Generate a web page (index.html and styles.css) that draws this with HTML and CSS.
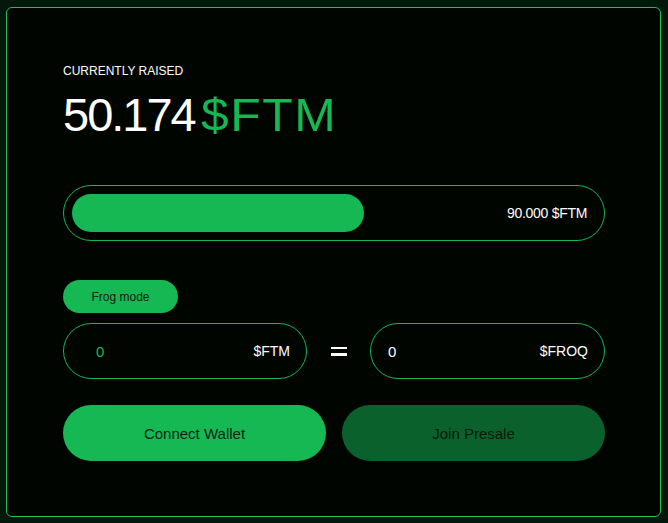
FILE: index.html
```html
<!DOCTYPE html>
<html lang="en">
<head>
<meta charset="utf-8">
<title>Presale</title>
<link rel="stylesheet" href="styles.css">
</head>
<body>
<main class="card">
  <div class="label">CURRENTLY RAISED</div>
  <div class="raised"><span class="amount">50.174</span> <span class="ticker">$FTM</span></div>

  <div class="progress">
    <div class="fill" style="width:55.75%"></div>
    <span class="goal">90.000 $FTM</span>
  </div>

  <button class="mode">Frog mode</button>

  <div class="swap">
    <div class="field field-from">
      <span class="value green">0</span>
      <span class="unit">$FTM</span>
    </div>
    <div class="equals"><span></span><span></span></div>
    <div class="field field-to">
      <span class="value">0</span>
      <span class="unit">$FROQ</span>
    </div>
  </div>

  <div class="actions">
    <button class="btn btn-primary">Connect Wallet</button>
    <button class="btn btn-secondary">Join Presale</button>
  </div>
</main>
</body>
</html>
```

FILE: styles.css
```css
* { box-sizing: border-box; }
html, body { height: 100%; }
body {
  margin: 0;
  padding: 7px 7px 6px 6px;
  background: #03170c;
  font-family: "Liberation Sans", Arial, sans-serif;
  color: #ffffff;
}
.card {
  height: 510px;
  border: 1px solid #1ec257;
  border-radius: 6px;
  background: #000500;
  padding: 56px 55px 0 56px;
  display: flex;
  flex-direction: column;
}
.label {
  font-size: 12px;
  line-height: 14px;
  color: #ffffff;
}
.raised {
  margin-top: 13px;
  font-size: 47px;
  line-height: 47px;
  display: flex;
  gap: 6px;
}
.amount { letter-spacing: -2px; color: #ffffff; }
.ticker { letter-spacing: 1.5px; color: #15b853; transform: scaleX(1.06); transform-origin: left center; }

.progress {
  margin-top: 47px;
  height: 56px;
  border: 1px solid #15b853;
  border-radius: 28px;
  padding: 8px;
  display: flex;
  align-items: center;
  justify-content: space-between;
}
.fill {
  height: 38px;
  border-radius: 19px;
  background: #15b853;
}
.goal {
  font-size: 14px;
  letter-spacing: -0.3px;
  padding-right: 9px;
}

.mode {
  margin-top: 39px;
  align-self: flex-start;
  width: 115px;
  height: 33px;
  border: 0;
  border-radius: 17px;
  background: #15b853;
  color: #0a2213;
  font-family: inherit;
  font-size: 12px;
  padding: 0;
}

.swap {
  margin-top: 10px;
  display: grid;
  grid-template-columns: 244px 1fr 235px;
  align-items: center;
}
.field {
  height: 56px;
  border: 1px solid #15b853;
  border-radius: 28px;
  display: flex;
  align-items: center;
  justify-content: space-between;
  padding: 0 16px 0 17px;
}
.field-from { padding-left: 32px; }
.value { font-size: 15px; color: #ffffff; }
.value.green { color: #15b853; }
.unit { font-size: 14px; color: #ffffff; }
.equals {
  justify-self: center;
  display: flex;
  flex-direction: column;
  gap: 4px;
  width: 16px;
}
.equals span {
  display: block;
  height: 2.5px;
  background: #ffffff;
}

.actions {
  margin-top: 26px;
  display: grid;
  grid-template-columns: 1fr 1fr;
  gap: 16px;
}
.btn {
  height: 56px;
  border: 0;
  border-radius: 28px;
  font-family: inherit;
  font-size: 15px;
  padding: 0;
}
.btn-primary { background: #15b853; color: #0a2213; }
.btn-secondary { background: #0a612b; color: #061a0c; }
```
